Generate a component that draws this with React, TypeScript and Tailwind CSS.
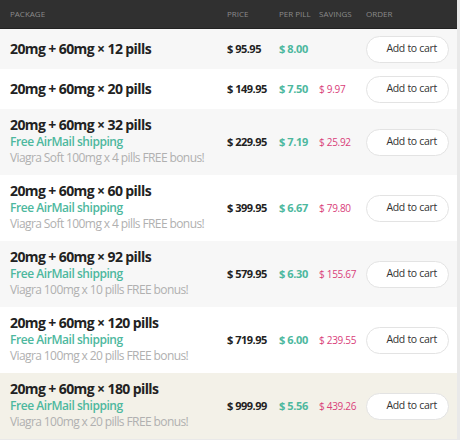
const rows = [
  { pills: 12, price: '95.95', per: '8.00', save: '', bonus: '', bg: 'bg-[#f7f7f7]' },
  { pills: 20, price: '149.95', per: '7.50', save: '9.97', bonus: '', bg: 'bg-white' },
  { pills: 32, price: '229.95', per: '7.19', save: '25.92', bonus: 'Viagra Soft 100mg x 4 pills FREE bonus!', bg: 'bg-[#f7f7f7]' },
  { pills: 60, price: '399.95', per: '6.67', save: '79.80', bonus: 'Viagra Soft 100mg x 4 pills FREE bonus!', bg: 'bg-white' },
  { pills: 92, price: '579.95', per: '6.30', save: '155.67', bonus: 'Viagra 100mg x 10 pills FREE bonus!', bg: 'bg-[#f7f7f7]' },
  { pills: 120, price: '719.95', per: '6.00', save: '239.55', bonus: 'Viagra 100mg x 20 pills FREE bonus!', bg: 'bg-white' },
  { pills: 180, price: '999.99', per: '5.56', save: '439.26', bonus: 'Viagra 100mg x 20 pills FREE bonus!', bg: 'bg-[#f3f1e8]' },
];

export default function App() {
  return (
    <div className="w-[460px] h-[440px] overflow-hidden bg-[#e9e9e9] font-['Open_Sans',sans-serif]">
      <div className="w-[457px]">
        {/* header */}
        <div className="flex items-center h-[29px] bg-[#303030] border-b border-[#222] text-[8px] uppercase text-[#8a8a8a]">
          <div className="pl-[10px] w-[227px]">Package</div>
          <div className="w-[52px]">Price</div>
          <div className="w-[40px]">Per pill</div>
          <div className="w-[47px]">Savings</div>
          <div>Order</div>
        </div>

        {rows.map((r) => (
          <div
            key={r.pills}
            className={`flex items-center ${r.bg} ${r.bonus ? 'h-[66px]' : 'h-[40px]'}`}
          >
            <div className="pl-[10px] w-[227px] leading-[16.5px] whitespace-nowrap">
              <div className="text-[14px] font-bold tracking-[-0.6px] text-[#222]">
                20mg + 60mg × {r.pills} pills
              </div>
              {r.bonus && (
                <>
                  <div className="text-[12px] font-semibold tracking-[-0.45px] text-[#4db89e]">
                    Free AirMail shipping
                  </div>
                  <div className="text-[12px] tracking-[-0.6px] text-[#b0b0b0]">{r.bonus}</div>
                </>
              )}
            </div>
            <div className="w-[52px] text-[11px] font-bold tracking-[-0.5px] text-[#222]">$ {r.price}</div>
            <div className="w-[40px] text-[11px] font-bold tracking-[-0.4px] text-[#4db89e]">$ {r.per}</div>
            <div className="w-[47px] text-[10px] tracking-[-0.3px] text-[#d9407a]">{r.save && `$ ${r.save}`}</div>
            <button className="w-[83px] h-[27px] rounded-full bg-white border border-[#e3e3e3] text-[10.5px] tracking-[-0.3px] text-[#333] text-right pr-[11px]">
              Add to cart
            </button>
          </div>
        ))}
      </div>
    </div>
  );
}
